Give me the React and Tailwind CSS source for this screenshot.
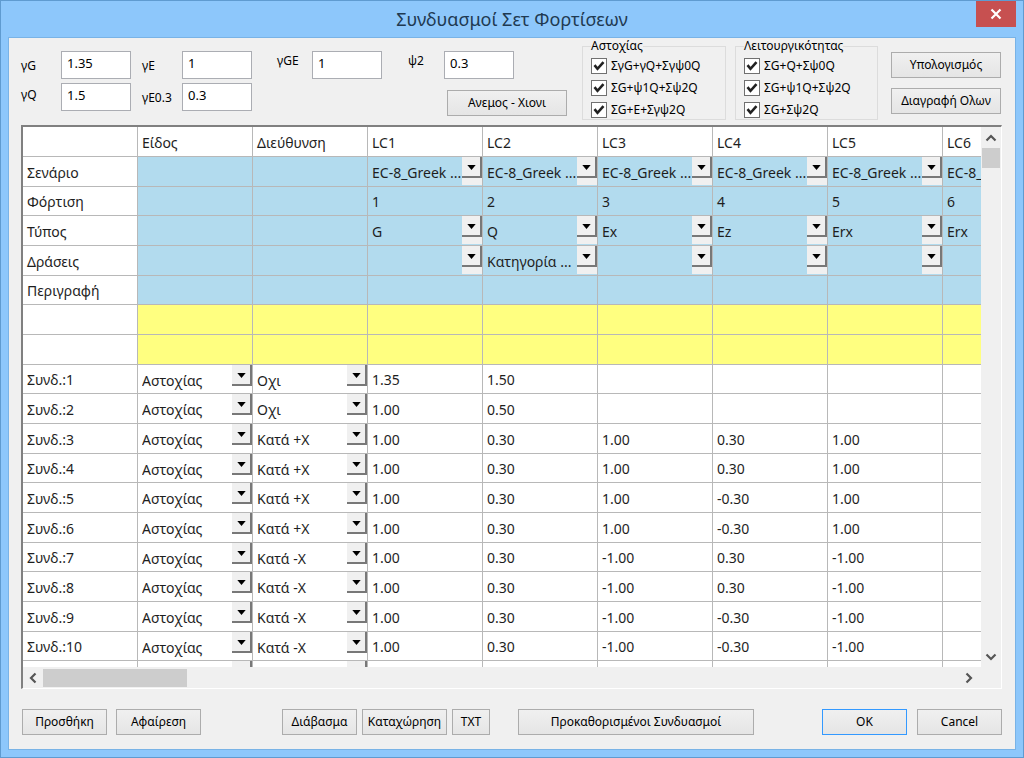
import React from 'react'

const COLUMNS = ['', 'Είδος', 'Διεύθυνση', 'LC1', 'LC2', 'LC3', 'LC4', 'LC5', 'LC6']

const pick = value => ({ value, select: true })
const scenario = pick('EC-8_Greek ...')

const LOAD_ROWS = [
  { name: 'Σενάριο', cells: ['', '', scenario, scenario, scenario, scenario, scenario, scenario] },
  { name: 'Φόρτιση', cells: ['', '', '1', '2', '3', '4', '5', '6'] },
  { name: 'Τύπος', cells: ['', '', pick('G'), pick('Q'), pick('Ex'), pick('Ez'), pick('Erx'), pick('Erx')] },
  { name: 'Δράσεις', cells: ['', '', pick(''), pick('Κατηγορία ...'), pick(''), pick(''), pick(''), pick('')] },
  { name: 'Περιγραφή', cells: ['', '', '', '', '', '', '', ''] },
]

const COMBINATIONS = [
  ['Οχι', '1.35', '1.50', '', '', ''],
  ['Οχι', '1.00', '0.50', '', '', ''],
  ['Κατά +X', '1.00', '0.30', '1.00', '0.30', '1.00'],
  ['Κατά +X', '1.00', '0.30', '1.00', '0.30', '1.00'],
  ['Κατά +X', '1.00', '0.30', '1.00', '-0.30', '1.00'],
  ['Κατά +X', '1.00', '0.30', '1.00', '-0.30', '1.00'],
  ['Κατά -X', '1.00', '0.30', '-1.00', '0.30', '-1.00'],
  ['Κατά -X', '1.00', '0.30', '-1.00', '0.30', '-1.00'],
  ['Κατά -X', '1.00', '0.30', '-1.00', '-0.30', '-1.00'],
  ['Κατά -X', '1.00', '0.30', '-1.00', '-0.30', '-1.00'],
]

const EMPTY_CELLS = ['', '', '', '', '', '', '', '']

const ROWS = [
  ...LOAD_ROWS.map(row => ({ ...row, tone: 'blue' })),
  { name: '', cells: EMPTY_CELLS, tone: 'yellow' },
  { name: '', cells: EMPTY_CELLS, tone: 'yellow' },
  ...COMBINATIONS.map(([direction, ...factors], i) => ({
    name: `Συνδ.:${i + 1}`,
    cells: [pick('Αστοχίας'), pick(direction), ...factors, ''],
    tone: 'white',
  })),
  { name: '', cells: [pick(''), pick(''), '', '', '', '', '', ''], tone: 'white' },
]

const TONES = {
  blue: 'bg-[#b2dbee]',
  yellow: 'bg-[#ffff80]',
  white: 'bg-white',
}

function Field({ id, label, value, labelClass }) {
  return (
    <div className="flex">
      <label htmlFor={id} className={`shrink-0 ${labelClass}`}>{label}</label>
      <input id={id} type="text" defaultValue={value}
        className="h-7 w-[70px] border border-[#abadb3] bg-white pb-1 pl-[5px] text-[13px] outline-none" />
    </div>
  )
}

function Button({ className = '', primary, children }) {
  return (
    <button type="button"
      className={`h-[26px] shrink-0 border bg-linear-to-b from-[#f0f0f0] to-[#e5e5e5] text-center whitespace-nowrap ${primary ? 'border-[#3399ff]' : 'border-[#acacac]'} ${className}`}>
      {children}
    </button>
  )
}

function CheckGroup({ title, items, className }) {
  return (
    <fieldset className={`h-[82px] shrink-0 border border-[#dcdcdc] pl-2 ${className}`}>
      <legend className="leading-4">{title}</legend>
      <div className="flex flex-col gap-[6px] pt-1">
        {items.map(item => (
          <label key={item} className="flex h-4 items-center gap-1 whitespace-nowrap">
            <span className="grid">
              <input type="checkbox" defaultChecked
                className="peer col-start-1 row-start-1 size-4 appearance-none border border-[#707070] bg-white" />
              <svg viewBox="0 0 16 16" className="pointer-events-none invisible col-start-1 row-start-1 size-4 peer-checked:visible">
                <path d="M3.5 7.2 L6.5 10.8 L12.5 4.2" fill="none" stroke="#212121" strokeWidth="2.6" />
              </svg>
            </span>
            {item}
          </label>
        ))}
      </div>
    </fieldset>
  )
}

function CellSelect({ value, label, tone }) {
  return (
    <div className="flex h-7">
      <select aria-label={label} defaultValue={value}
        className="min-w-0 flex-1 appearance-none bg-transparent pt-[3px] pl-1 outline-none">
        <option>{value}</option>
      </select>
      <span className={`w-5 shrink-0 ${tone === 'blue' ? 'bg-[#f0f0f0]' : ''}`}>
        <span className="flex h-[21px] items-center justify-center border-r-2 border-b-2 border-[#787878] bg-[#f0f0f0] pt-px">
          <svg viewBox="0 0 10 6" className="h-[5px] w-[9px]"><path d="M0 0h10L5 6z" fill="#000" /></svg>
        </span>
      </span>
    </div>
  )
}

function Chevron({ d }) {
  return (
    <svg viewBox="0 0 12 12" className="size-3">
      <path d={d} fill="none" stroke="#555" strokeWidth="2.2" />
    </svg>
  )
}

function Grid() {
  return (
    <table className="w-[1035px] table-fixed border-separate border-spacing-0 text-[14px] leading-5 text-[#1e1e1e]">
      <thead>
        <tr className="h-[30px]">
          {COLUMNS.map((name, i) => (
            <th key={i} scope="col" className="border-r border-b border-[#b8b8b8] bg-white p-0 pt-[2px] pl-1 text-left font-normal">{name}</th>
          ))}
        </tr>
      </thead>
      <tbody>
        {ROWS.map((row, r) => (
          <tr key={r} className={r % 3 === 1 ? 'h-[29px]' : 'h-[30px]'}>
            <th scope="row" className="border-r border-b border-[#b8b8b8] bg-white p-0 pt-[2px] pl-1 text-left font-normal">{row.name}</th>
            {row.cells.map((cell, c) => cell.select ? (
              <td key={c} className={`border-r border-b border-[#b8b8b8] p-0 align-top ${TONES[row.tone]}`}>
                <CellSelect value={cell.value} tone={row.tone} label={`${row.name} ${COLUMNS[c + 1]}`} />
              </td>
            ) : (
              <td key={c} className={`border-r border-b border-[#b8b8b8] p-0 pt-[2px] pl-1 ${TONES[row.tone]}`}>{cell}</td>
            ))}
          </tr>
        ))}
      </tbody>
    </table>
  )
}

export default function App() {
  return (
    <div className="flex h-screen flex-col border border-[#5f9bd0] bg-[#8dc7fb] px-[7px] pb-[7px] font-['Noto_Sans','Open_Sans',sans-serif] text-[12px] leading-4 text-black">
      <header className="flex h-9 shrink-0">
        <div className="w-10" />
        <h1 className="flex-1 pt-1 text-center text-[18px] leading-7 text-[#1f3a52]">Συνδυασμοί Σετ Φορτίσεων</h1>
        <button type="button" aria-label="Close" className="flex h-[26px] w-10 items-center justify-center bg-[#c75050]">
          <svg viewBox="0 0 12 12" className="size-3">
            <path d="M1.5 1.5l9 9M10.5 1.5l-9 9" stroke="#fff" strokeWidth="2.2" />
          </svg>
        </button>
      </header>

      <main className="flex min-h-0 flex-1 flex-col border border-[#79b3e6] bg-[#f0f0f0] pr-[13px] pb-[14px] pl-3">
        <div className="flex h-[87px] shrink-0 pr-px">
          <div className="flex flex-col gap-1 pt-[13px]">
            <Field id="gG" label="γG" value="1.35" labelClass="w-10 pt-[7px]" />
            <Field id="gQ" label="γQ" value="1.5" labelClass="w-10 pt-1" />
          </div>
          <div className="ml-[11px] flex flex-col gap-1 pt-[13px]">
            <Field id="gE" label="γE" value="1" labelClass="w-10 pt-[7px]" />
            <Field id="gE03" label="γE0.3" value="0.3" labelClass="w-10 pt-[7px]" />
          </div>
          <div className="ml-[25px] flex w-[290px] flex-col gap-[11px] pt-[13px]">
            <div className="flex gap-[26px]">
              <Field id="gGE" label="γGE" value="1" labelClass="w-[35px] pt-[2px]" />
              <Field id="psi2" label="ψ2" value="0.3" labelClass="w-9 pt-[2px]" />
            </div>
            <Button className="w-[120px] self-end">Ανεμος - Χιονι</Button>
          </div>
          <div className="ml-[15px] flex gap-[9px]">
            <CheckGroup title="Αστοχίας" className="w-36" items={['ΣγG+γQ+Σγψ0Q', 'ΣG+ψ1Q+Σψ2Q', 'ΣG+E+Σγψ2Q']} />
            <CheckGroup title="Λειτουργικότητας" className="w-[143px]" items={['ΣG+Q+Σψ0Q', 'ΣG+ψ1Q+Σψ2Q', 'ΣG+Σψ2Q']} />
          </div>
          <div className="ml-auto flex flex-col gap-[10px] pt-[14px]">
            <Button className="w-[110px]">Υπολογισμός</Button>
            <Button className="w-[110px]">Διαγραφή Ολων</Button>
          </div>
        </div>

        <div className="flex min-h-0 flex-1 flex-col border-t-2 border-r border-b border-l-2 border-t-[#808080] border-r-white border-b-white border-l-[#808080]">
          <div className="flex min-h-0 flex-1">
            <div className="min-w-0 flex-1 overflow-hidden bg-white">
              <Grid />
            </div>
            <div className="flex w-5 shrink-0 flex-col items-center pt-[5px] pb-1">
              <Chevron d="M1.5 8.5L6 4l4.5 4.5" />
              <div className="mt-1 h-5 w-[18px] bg-[#cdcdcd]" />
              <div className="mt-auto"><Chevron d="M1.5 3.5L6 8l4.5-4.5" /></div>
            </div>
          </div>
          <div className="flex h-[21px] shrink-0 items-center pr-[26px] pl-1">
            <Chevron d="M8.5 1.5L4 6l4.5 4.5" />
            <div className="ml-1 h-[18px] w-36 bg-[#cdcdcd]" />
            <div className="ml-auto"><Chevron d="M3.5 1.5L8 6l-4.5 4.5" /></div>
          </div>
        </div>

        <footer className="mt-5 flex shrink-0 pl-px">
          <Button className="w-[85px]">Προσθήκη</Button>
          <Button className="ml-[9px] w-[85px]">Αφαίρεση</Button>
          <div className="ml-[81px] flex gap-[5px]">
            <Button className="w-[75px]">Διάβασμα</Button>
            <Button className="w-[85px]">Καταχώρηση</Button>
            <Button className="w-[38px]">TXT</Button>
          </div>
          <Button className="ml-7 w-[236px]">Προκαθορισμένοι Συνδυασμοί</Button>
          <div className="ml-auto flex gap-[10px]">
            <Button primary className="w-[85px]">OK</Button>
            <Button className="w-[85px]">Cancel</Button>
          </div>
        </footer>
      </main>
    </div>
  )
}
